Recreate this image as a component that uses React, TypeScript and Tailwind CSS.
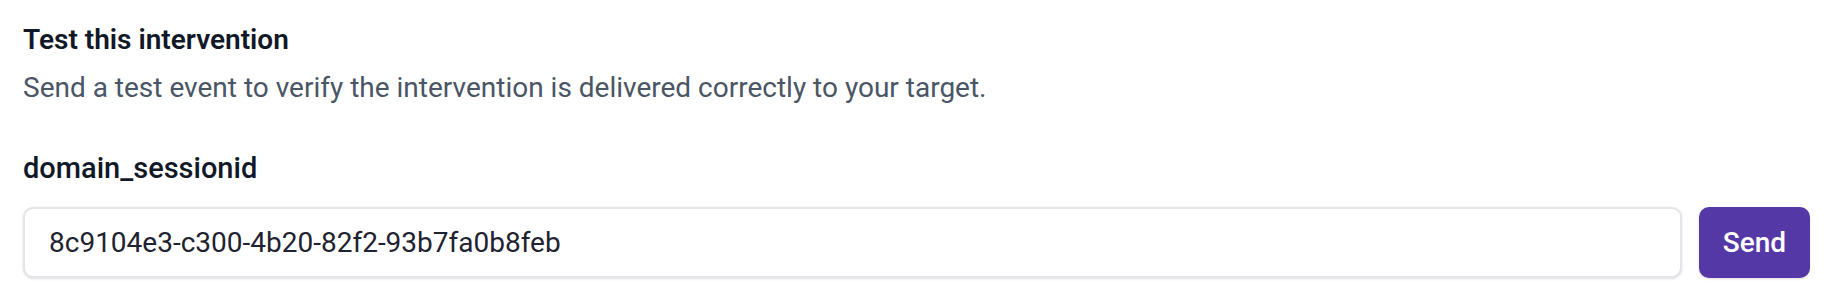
import React from "react";

export default function App() {
  return (
    <div className="w-[1828px] h-[290px] bg-white font-['Roboto',sans-serif] pl-[23px] pr-[18px] pt-[20px]">
      <h2 className="text-[28px] leading-[40px] font-semibold text-[#111827]">Test this intervention</h2>
      <p className="mt-[8px] text-[28px] leading-[40px] text-[#4a5565]">
        Send a test event to verify the intervention is delivered correctly to your target.
      </p>
      <label className="block mt-[40px] text-[29px] leading-[40px] font-medium text-[#111827]">domain_sessionid</label>
      <div className="mt-[19px] flex gap-[17px] h-[71px]">
        <div className="flex-1 flex items-center rounded-[10px] border-2 border-[#e4e4ea] bg-white shadow-sm pl-[24px]">
          <span className="text-[28px] text-[#1f2230]">8c9104e3-c300-4b20-82f2-93b7fa0b8feb</span>
        </div>
        <button className="w-[111px] rounded-[10px] bg-[#5439a6] text-white text-[28px] font-medium shadow-sm">Send</button>
      </div>
    </div>
  );
}
